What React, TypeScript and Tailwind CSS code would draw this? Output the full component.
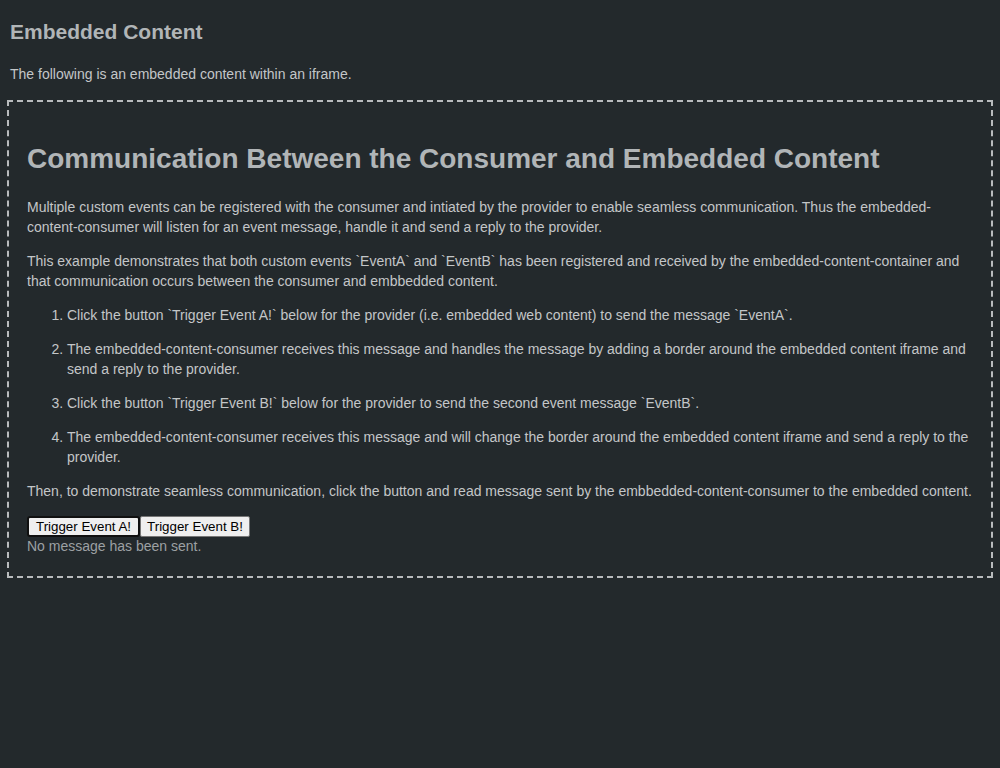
export default function App() {
  return (
    <div className="min-h-screen bg-[#23292c] px-[10px] pt-[20px] font-['Liberation_Sans',Arial,sans-serif] text-[#c3c6c8]">
      <h2 className="text-[21px] font-bold leading-[24px] text-[#b1b5b7]">Embedded Content</h2>
      <p className="mt-[20px] text-[14px] leading-[20px]">
        The following is an embedded content within an iframe.
      </p>

      <div className="-mx-[3px] mt-[16px] border-2 border-dashed border-[#b8bbbd] pl-[18px] pr-[12px] pt-[39px] pb-[21px]">
        <h1 className="text-[28px] font-bold leading-[36px] text-[#b1b5b7]">
          Communication Between the Consumer and Embedded Content
        </h1>

        <p className="mt-[20px] text-[14px] leading-[20px]">
          Multiple custom events can be registered with the consumer and intiated by the provider to enable seamless
          communication. Thus the embedded-content-consumer will listen for an event message, handle it and send a
          reply to the provider.
        </p>
        <p className="mt-[14px] text-[14px] leading-[20px]">
          This example demonstrates that both custom events `EventA` and `EventB` has been registered and received by
          the embedded-content-container and that communication occurs between the consumer and embbedded content.
        </p>

        <ol className="mt-[14px] list-decimal pl-[40px] text-[14px] leading-[20px]">
          <li>
            Click the button `Trigger Event A!` below for the provider (i.e. embedded web content) to send the message
            `EventA`.
          </li>
          <li className="mt-[14px]">
            The embedded-content-consumer receives this message and handles the message by adding a border around the
            embedded content iframe and send a reply to the provider.
          </li>
          <li className="mt-[14px]">
            Click the button `Trigger Event B!` below for the provider to send the second event message `EventB`.
          </li>
          <li className="mt-[14px]">
            The embedded-content-consumer receives this message and will change the border around the embedded content
            iframe and send a reply to the provider.
          </li>
        </ol>

        <p className="mt-[14px] text-[14px] leading-[20px]">
          Then, to demonstrate seamless communication, click the button and read message sent by the
          embbedded-content-consumer to the embedded content.
        </p>

        <div className="mt-[15px] flex">
          <button className="h-[21px] rounded-[3px] border-2 border-[#101010] bg-[#efefef] px-[7px] text-[13.33px] leading-[15px] text-black">
            Trigger Event A!
          </button>
          <button className="h-[21px] rounded-[2px] border border-[#767676] bg-[#efefef] px-[6px] text-[13.33px] leading-[15px] text-black">
            Trigger Event B!
          </button>
        </div>
        <p className="text-[14px] leading-[18px] text-[#9ca0a3]">No message has been sent.</p>
      </div>
    </div>
  );
}
